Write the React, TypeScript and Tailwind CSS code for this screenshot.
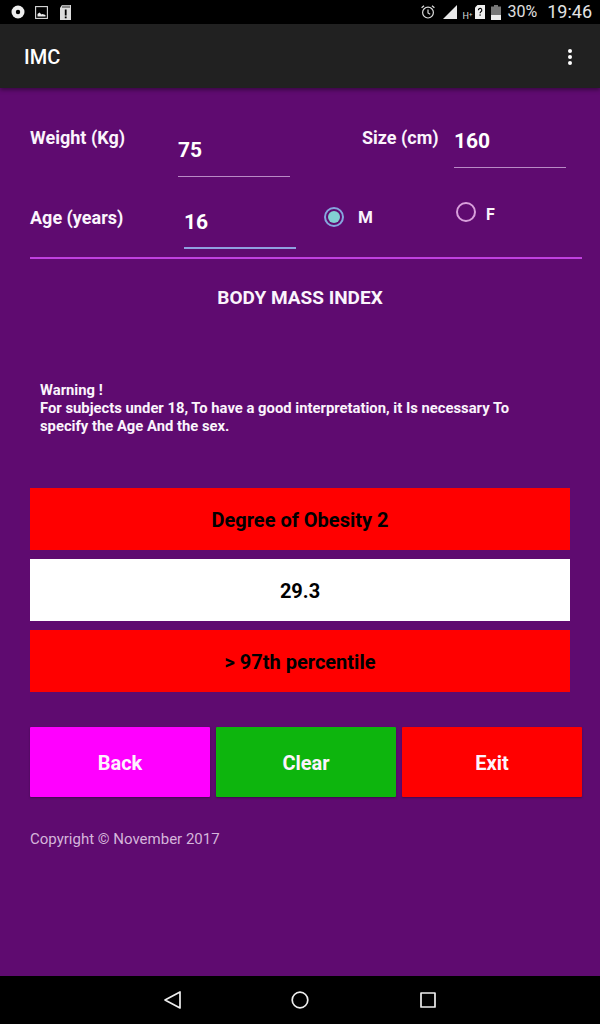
export default function App() {
  return (
    <div className="flex flex-col w-[600px] h-[1024px] overflow-hidden bg-[#5f0b70] font-['Roboto',sans-serif] text-white">
      {/* Status bar */}
      <div className="flex items-center h-6 bg-black shrink-0 pl-[11px] pr-[8px]">
        <svg width="14" height="14" viewBox="0 0 14 14"><circle cx="7" cy="7" r="6.5" fill="#eee" /><circle cx="7" cy="7" r="2.2" fill="#000" /></svg>
        <svg className="ml-[10px]" width="13" height="13" viewBox="0 0 13 13"><rect x="0.6" y="0.6" width="11.8" height="11.8" fill="none" stroke="#ddd" strokeWidth="1.1" /><path d="M2.5 10.5V8l2-1.5 2 2 1-.6 3 1v1.6z" fill="#eee" /></svg>
        <svg className="ml-[12px]" width="11" height="15" viewBox="0 0 11 15"><path d="M2 0h9v15H0V3z" fill="#ddd" /><rect x="4.8" y="4.5" width="1.8" height="6" fill="#000" /><rect x="4.8" y="11.5" width="1.8" height="1.8" fill="#000" /><path d="M3 .5v2.5M5 .5v2.5M7 .5v2.5M9 .5v2.5" stroke="#000" strokeWidth="0.8" /></svg>
        <div className="flex-1" />
        <svg width="16" height="16" viewBox="0 0 16 16" fill="none" stroke="#ddd" strokeWidth="1.2"><circle cx="8" cy="8.6" r="5.4" /><path d="M8 5.5v3.4l2.2 1.3M1.6 3.8 4 1.8M14.4 3.8 12 1.8" /></svg>
        <svg className="ml-[7px]" width="14" height="14" viewBox="0 0 14 14"><path d="M14 0v14H0z" fill="#e8e8e8" /></svg>
        <span className="ml-[5px] mt-[7px] text-[9px] leading-[10px] text-[#ddd] w-[10px]">H<sup className="text-[6px]">+</sup></span>
        <svg className="ml-[3px]" width="10" height="14" viewBox="0 0 10 14"><path d="M2.5 0H10v14H0V2.5z" fill="#eee" /><path d="M3.4 5.2a1.7 1.7 0 1 1 2.7 1.3c-.7.5-1 .8-1 1.7" fill="none" stroke="#000" strokeWidth="1.1" /><rect x="4.5" y="9.4" width="1.2" height="1.3" fill="#000" /></svg>
        <svg className="ml-[6px]" width="10" height="15" viewBox="0 0 10 15"><rect x="3" width="4" height="2" fill="#777" /><rect y="1.5" width="10" height="8.5" fill="#777" /><rect y="10" width="10" height="5" fill="#eee" /></svg>
        <span className="ml-[6px] text-[16px] leading-6 text-[#e0e0e0]">30%</span>
        <span className="ml-[10px] text-[18px] leading-6 text-[#e4e4e4]">19:46</span>
      </div>

      {/* App bar */}
      <div className="flex items-center justify-between h-16 bg-[#212121] shrink-0 pl-6 pr-[28px] pt-[1px] shadow-[0_2px_4px_rgba(0,0,0,0.4)]">
        <span className="text-[20px] font-medium leading-none">IMC</span>
        <div className="flex flex-col gap-[2px]">
          <span className="w-1 h-1 rounded-full bg-white" />
          <span className="w-1 h-1 rounded-full bg-white" />
          <span className="w-1 h-1 rounded-full bg-white" />
        </div>
      </div>

      {/* Content */}
      <div className="flex-1 flex flex-col pl-[30px] pr-[18px] font-bold">
        {/* Row 1 */}
        <div className="flex items-start h-[89px] text-[#fbf4fc]">
          <span className="w-[148px] mt-[40px] text-[18px] leading-5">Weight (Kg)</span>
          <div className="w-[112px] mt-[44px] h-[45px] border-b border-[#b98ac6] text-[21px] leading-[36px] text-white">75</div>
          <span className="ml-[72px] w-[92px] mt-[40px] text-[18px] leading-5">Size (cm)</span>
          <div className="w-[112px] mt-[35px] h-[45px] border-b border-[#b98ac6] text-[21px] leading-[36px] text-white">160</div>
        </div>
        {/* Row 2 */}
        <div className="flex items-start h-[80px] text-[#fbf4fc]">
          <span className="w-[154px] mt-[31px] text-[18px] leading-5">Age (years)</span>
          <div className="w-[112px] mt-[26px] h-[46px] border-b-2 border-[#8fa0e0] text-[21px] leading-[38px] text-white">16</div>
          <div className="ml-[28px] mt-[30px] w-5 h-5 rounded-full border-2 border-[#86a6de] flex items-center justify-center">
            <span className="w-3 h-3 rounded-full bg-[#82cfd2]" />
          </div>
          <span className="ml-[14px] w-[98px] mt-[30px] text-[17px] leading-5">M</span>
          <div className="mt-[25px] w-5 h-5 rounded-full border-2 border-[#d9a0dc]" />
          <span className="ml-[10px] mt-[28px] text-[16px] leading-5">F</span>
        </div>
        {/* Divider */}
        <div className="h-[2px] bg-[#c040e0] shrink-0" />

        <div className="w-[540px] mt-[28px] text-center text-[19px] leading-[22px] text-[#fbf4fc]">BODY MASS INDEX</div>

        <div className="mt-[72px] ml-[10px] w-[490px] text-[14.8px] leading-[18px] text-[#fbf4fc]">
          <div>Warning !</div>
          <div>For subjects under 18, To have a good interpretation, it Is necessary To specify the Age And the sex.</div>
        </div>

        {/* Results */}
        <div className="flex flex-col gap-[9px] mt-[53px] w-[540px] text-center text-[20px] text-black">
          <div className="h-[62px] pt-[1px] flex items-center justify-center bg-[#ff0000]">Degree of Obesity 2</div>
          <div className="h-[62px] pt-[1px] flex items-center justify-center bg-white">29.3</div>
          <div className="h-[62px] pt-[1px] flex items-center justify-center bg-[#ff0000]">&gt; 97th percentile</div>
        </div>

        {/* Buttons */}
        <div className="flex gap-[6px] mt-[35px] text-[20px] text-[#fdf3fd]">
          <div className="w-[180px] h-[70px] pt-[1px] flex items-center justify-center bg-[#ff00ff] rounded-[1px] shadow-[0_1px_2px_rgba(0,0,0,0.3)]">Back</div>
          <div className="w-[180px] h-[70px] pt-[1px] flex items-center justify-center bg-[#0db50d] rounded-[1px] shadow-[0_1px_2px_rgba(0,0,0,0.3)]">Clear</div>
          <div className="w-[180px] h-[70px] pt-[1px] flex items-center justify-center bg-[#ff0000] rounded-[1px] shadow-[0_1px_2px_rgba(0,0,0,0.3)]">Exit</div>
        </div>

        <div className="mt-[32px] text-[15px] leading-5 font-normal text-[#d5b5db]">Copyright © November 2017</div>
      </div>

      {/* Nav bar */}
      <div className="flex items-center justify-center h-12 bg-black shrink-0">
        <svg width="18" height="20" viewBox="0 0 18 20" fill="none" stroke="#eee" strokeWidth="1.7" strokeLinejoin="round"><path d="M16 2v16L1 10z" /></svg>
        <svg className="ml-[109px]" width="18" height="18" viewBox="0 0 18 18" fill="none" stroke="#eee" strokeWidth="1.7"><circle cx="9" cy="9" r="7.8" /></svg>
        <svg className="ml-[111px]" width="16" height="16" viewBox="0 0 16 16" fill="none" stroke="#eee" strokeWidth="1.7" strokeLinejoin="round"><rect x="1" y="1" width="14" height="14" /></svg>
      </div>
    </div>
  );
}
